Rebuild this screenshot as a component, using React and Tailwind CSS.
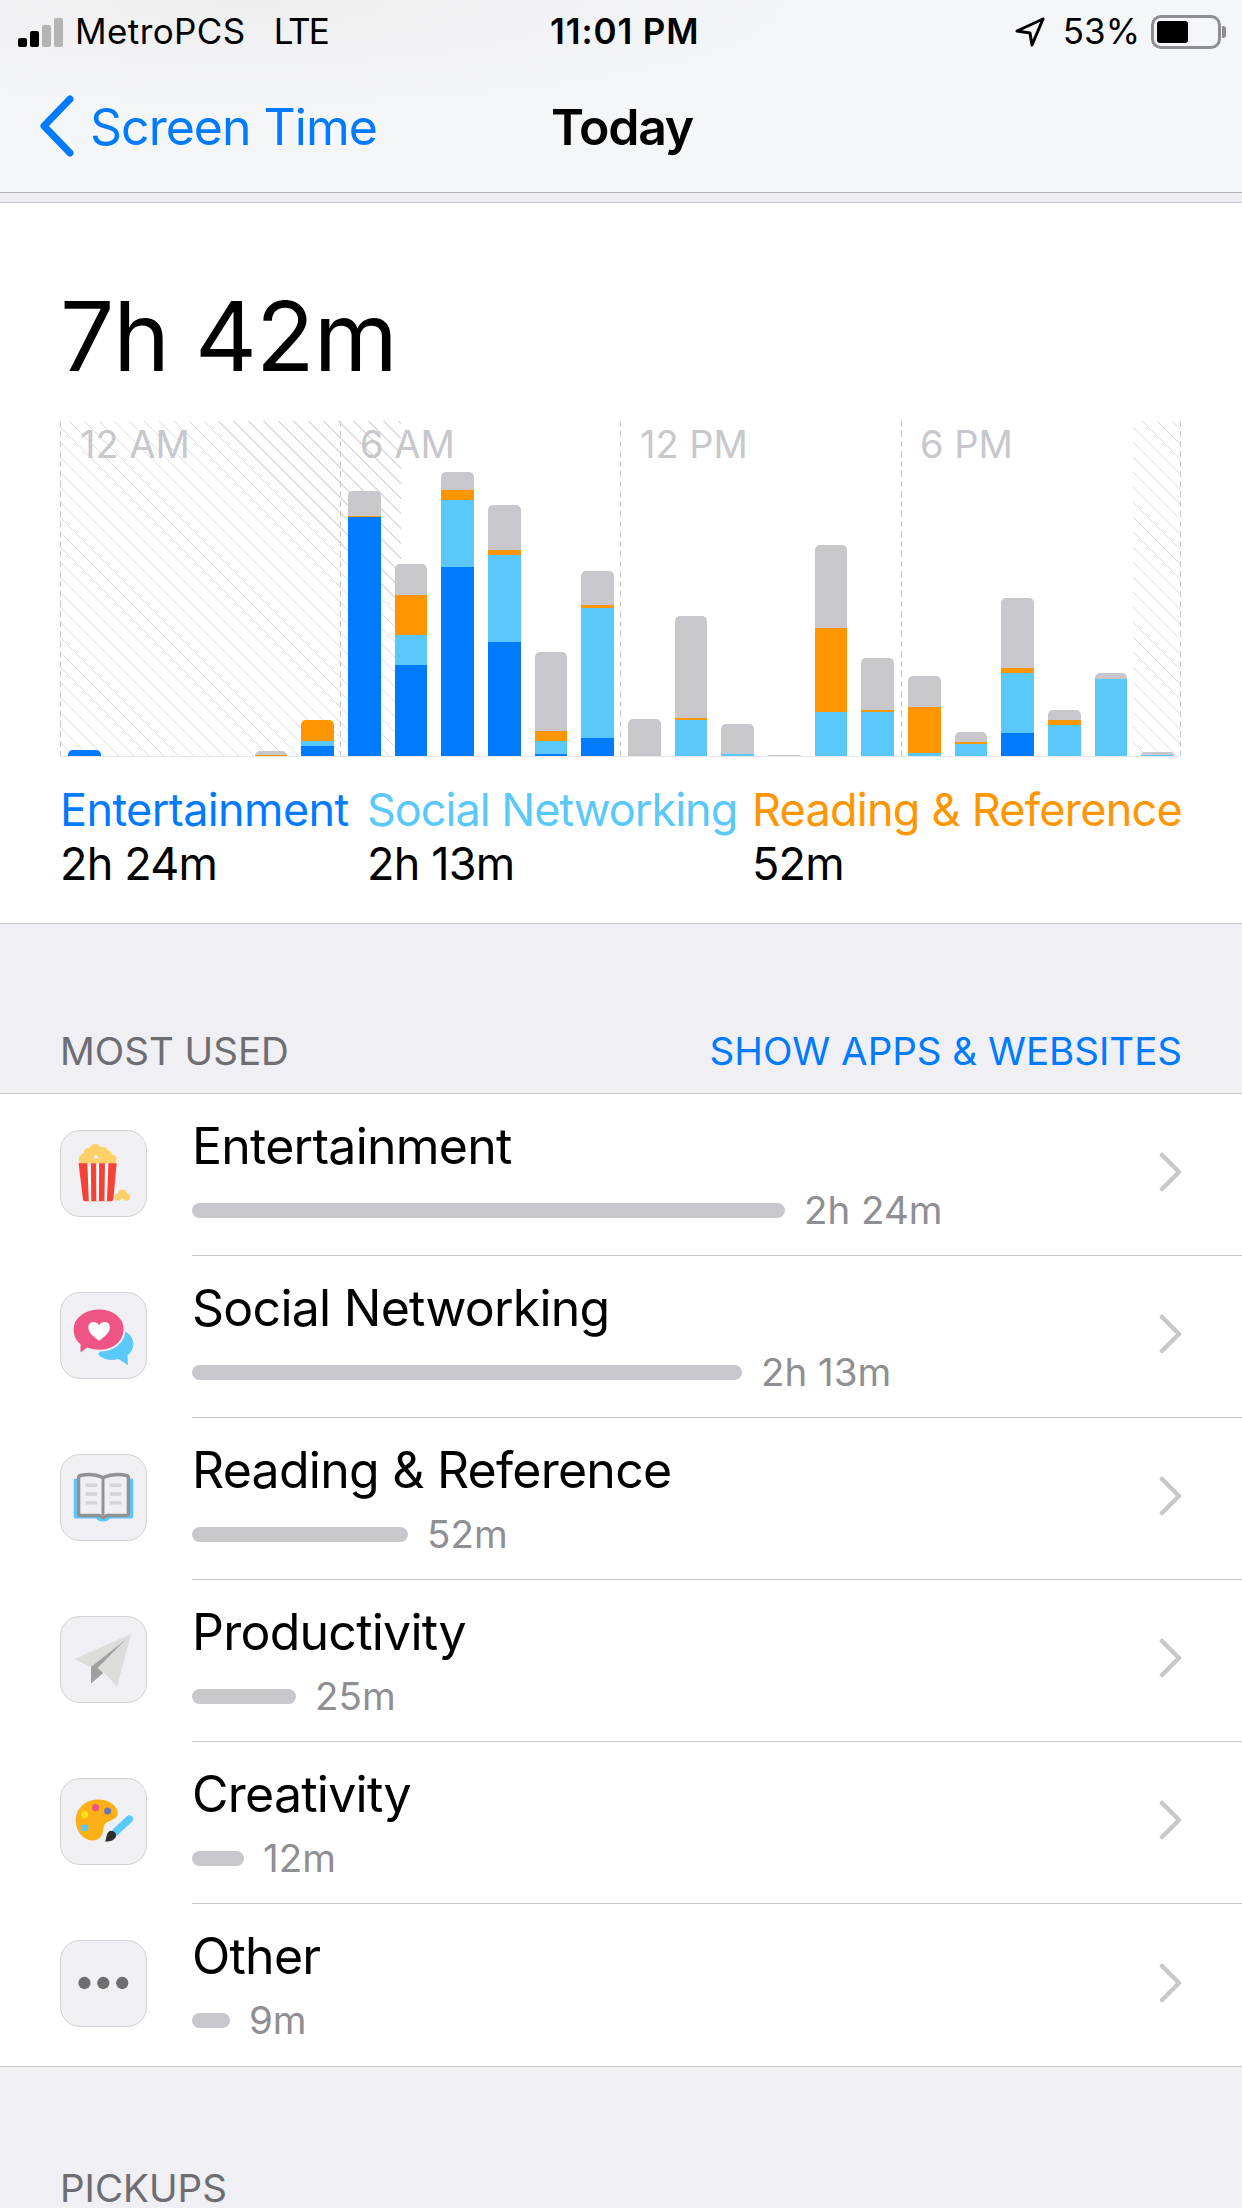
import React from 'react';

const font = { fontFamily: 'Inter, "Liberation Sans", sans-serif' };

// heights in px from the chart baseline: [blue, light blue, orange, gray]
const bars = [
  [6.3, 0, 0, 0], [0, 0, 0, 0], [0, 0, 0, 0], [0, 0, 0, 0],
  [0, 0, 0.7, 4], [9.7, 5, 21.7, 0], [238.7, 0, 1.3, 24.7], [90.7, 30, 40, 31],
  [188.7, 67, 10, 18], [113.7, 87, 5, 45], [1.7, 13, 10, 79], [17.7, 130.7, 2.3, 34],
  [0, 0, 0, 36.7], [0, 35.7, 2, 102], [0, 1.7, 0, 30], [0, 0, 0, 0.7],
  [0, 44.3, 83.3, 83], [0, 43.7, 2, 52], [0, 2.7, 46, 31], [0, 12.3, 1.3, 10],
  [22.7, 60, 5, 70], [0, 30.7, 5, 10], [0, 76.7, 0, 6], [0, 1.5, 0, 2.5],
];

const barColors = ['bg-[#007aff]', 'bg-[#5ac8fa]', 'bg-[#ff9500]', 'bg-[#c7c7cc]'];

const PopcornIcon = () => (
  <svg viewBox="0 0 87 87" className="w-full h-full">
    <g fill="#fdd167">
      <circle cx="24" cy="29" r="6" />
      <circle cx="29" cy="23" r="6" />
      <circle cx="35" cy="19" r="6" />
      <circle cx="42" cy="22" r="6" />
      <circle cx="47" cy="25" r="5.5" />
      <circle cx="52" cy="29" r="5" />
      <path d="M18 33 L22 28 H53 L57 33 Z" />
    </g>
    <path d="M18 33 H57 L53.5 70 Q53 72 51 72 H25 Q23 72 22.5 70 Z" fill="#f44336" />
    <path d="M27 33 H30.5 L31 72 H28.5 Z M36 33 H39 L38.8 72 H36.2 Z M45 33 H48.5 L47 72 H44.5 Z" fill="#fff" />
    <g fill="#fdd167">
      <circle cx="58.5" cy="67.5" r="3.8" />
      <circle cx="63" cy="64.5" r="4.6" />
      <circle cx="67" cy="67.5" r="3.8" />
    </g>
  </svg>
);

const ChatIcon = () => (
  <svg viewBox="0 0 87 87" className="w-full h-full">
    <path d="M52 36 C65 36 74 43 74 52 C74 57 72 61 68 64 L68.5 74 L59 67.5 C50 70 43 68 38 63 Z" fill="#5ac8fa" />
    <path d="M39 16 C54 16 65 25 65 37 C65 50 54 59 39 59 C34 59 30 58 27 57 L19 63 L19 53 C14 49 12 43 12 37 C12 25 24 16 39 16 Z" fill="#ee5584" stroke="#efeff4" strokeWidth="2" />
    <path d="M39 49 C33 44 28 41 28 35 C28 29 36 28 39 33 C42 28 50 29 50 35 C50 41 45 44 39 49 Z" fill="#fff" />
  </svg>
);

const BookIcon = () => (
  <svg viewBox="0 0 87 87" className="w-full h-full">
    <path d="M15 24 H72 Q74 24 74 26 V63 Q74 65 72 65 H50 Q48 68 43 68 Q38 68 36 65 H15 Q13 65 13 63 V26 Q13 24 15 24 Z" fill="#5ac8fa" />
    <path d="M20 21 Q32 18 43 23 Q55 18 67 21 Q69 21 69 24 V60 Q69 62 67 62 H47 L43 64 L39 62 H20 Q18 62 18 60 V24 Q18 21 20 21 Z" fill="#efeff4" stroke="#929292" strokeWidth="3.5" />
    <path d="M43 23 V62" stroke="#929292" strokeWidth="3" />
    <path d="M25 31 H37 M25 40 H37 M25 49 H37 M50 31 H62 M50 40 H62 M50 49 H62" stroke="#d4d4d6" strokeWidth="3.5" />
  </svg>
);

const PlaneIcon = () => (
  <svg viewBox="0 0 87 87" className="w-full h-full">
    <path d="M13.3 43.3 L71.7 17.3 L57.3 71.3 L43.3 55.7 L30.7 68 V51.3 Z" fill="#dcdcdb" />
    <path d="M66 23.3 L30.7 51.3 V68 L43.3 57.3 L37.3 52.3 Z" fill="#a0a0a0" />
  </svg>
);

const PaletteIcon = () => (
  <svg viewBox="0 0 87 87" className="w-full h-full">
    <path d="M36 21 C48 20 58 27 58 35 C58 42 48 42 45 46 C42 50 45 58 37 62 C26 66 15 56 15 42 C15 31 24 22 36 21 Z" fill="#fbb116" />
    <circle cx="35.3" cy="29.3" r="3.6" fill="#ee5584" />
    <circle cx="47.7" cy="32.7" r="3.6" fill="#6b75b5" />
    <circle cx="24.3" cy="36.7" r="3.6" fill="#ffe01b" />
    <circle cx="24.3" cy="50" r="3.6" fill="#5ac8fa" />
    <path d="M70 41 L56 54" stroke="#5ac8fa" strokeWidth="7.5" strokeLinecap="round" />
    <path d="M51 53 C56 53 58 58 55 61 C52 64 49 64 45 64 C47 61 46 54 51 53 Z" fill="#2e2e2e" />
  </svg>
);

const DotsIcon = () => (
  <svg viewBox="0 0 87 87" className="w-full h-full">
    <circle cx="24" cy="43" r="6.3" fill="#6d6d72" />
    <circle cx="43.3" cy="43" r="6.3" fill="#6d6d72" />
    <circle cx="62.7" cy="43" r="6.3" fill="#6d6d72" />
  </svg>
);

const rows = [
  { name: 'Entertainment', time: '2h 24m', width: 593, Icon: PopcornIcon },
  { name: 'Social Networking', time: '2h 13m', width: 550, Icon: ChatIcon },
  { name: 'Reading & Reference', time: '52m', width: 216, Icon: BookIcon },
  { name: 'Productivity', time: '25m', width: 104, Icon: PlaneIcon },
  { name: 'Creativity', time: '12m', width: 52, Icon: PaletteIcon },
  { name: 'Other', time: '9m', width: 38, Icon: DotsIcon },
];

const legend = [
  { name: 'Entertainment', time: '2h 24m', color: 'text-[#007aff] tracking-[-0.6px]', width: 'w-[307px]' },
  { name: 'Social Networking', time: '2h 13m', color: 'text-[#5ac8fa] tracking-[-1px]', width: 'w-[385px]' },
  { name: 'Reading & Reference', time: '52m', color: 'text-[#ff9500] tracking-[-0.75px]', width: 'w-[430px]' },
];

function StatusBar() {
  return (
    <div className="h-[63px] pl-[18px] pr-[16px] flex items-center text-[35px] text-black relative">
      <div className="flex items-end gap-[3px] h-[29px] mt-[1px]">
        <div className="w-[9px] h-[9px] bg-black rounded-[2px]" />
        <div className="w-[9px] h-[16px] bg-black rounded-[2px]" />
        <div className="w-[9px] h-[22px] bg-[#b4b4b4] rounded-[2px]" />
        <div className="w-[9px] h-[29px] bg-[#b4b4b4] rounded-[2px]" />
      </div>
      <span className="ml-[12px] tracking-[0.4px]">MetroPCS</span>
      <span className="ml-[28px] tracking-[-2px]">LTE</span>
      <span className="absolute left-[550px] font-semibold tracking-[0.9px]">11:01 PM</span>
      <div className="ml-auto flex items-center">
        <svg viewBox="0 0 30 30" className="w-[30px] h-[30px] mr-[18px]">
          <path d="M28 2 L2 14 L15 16 L17 28 Z" fill="none" stroke="#000" strokeWidth="3" strokeLinejoin="round" />
        </svg>
        <span>53%</span>
        <div className="ml-[11px] w-[70px] h-[34px] border-[3px] border-[#8e8e93] rounded-[10px] p-[3px]">
          <div className="w-[31px] h-full bg-black rounded-[3px]" />
        </div>
        <div className="w-[4px] h-[12px] bg-[#8e8e93] rounded-r-[3px] ml-[1px]" />
      </div>
    </div>
  );
}

function NavBar() {
  return (
    <div className="h-[129px] pl-[39px] flex items-center relative">
      <svg viewBox="0 0 36 62" className="w-[36px] h-[62px] -mt-[4px]">
        <path d="M31 4 L5 31 L31 58" fill="none" stroke="#007aff" strokeWidth="7" strokeLinecap="round" strokeLinejoin="round" />
      </svg>
      <span className="ml-[15px] text-[50px] text-[#007aff] tracking-[-1px]">Screen Time</span>
      <span className="absolute left-[551px] text-[50px] font-semibold text-black tracking-[-1.2px]">Today</span>
    </div>
  );
}

function Chart() {
  const hatch = 'h-full bg-[repeating-linear-gradient(45deg,transparent_0,transparent_9.4px,#dcdce0_9.4px,#dcdce0_10.6px)]';
  const dash = 'absolute top-0 bottom-0 w-[1px] bg-[repeating-linear-gradient(180deg,#c7c7cc_0,#c7c7cc_6px,transparent_6px,transparent_10px)]';
  return (
    <div className="relative h-[336px] w-[1120px] border-b border-[#e5e5ea]">
      {/* night-time hatching */}
      <div className="absolute inset-0 flex justify-between">
        <div className={`w-[341px] ${hatch}`} />
        <div className={`w-[47px] ${hatch}`} />
      </div>
      {['left-0', 'left-[280px]', 'left-[560px]', 'left-[841px]', 'left-[1120px]'].map((pos) => (
        <div key={pos} className={`${dash} ${pos}`} />
      ))}
      <div className="absolute inset-0 grid grid-cols-4 text-[38px] leading-[44px] text-[#c7c7cc] pt-[1px]">
        {['12 AM', '6 AM', '12 PM', '6 PM'].map((t) => (
          <span key={t} className="pl-[20px]">{t}</span>
        ))}
      </div>
      <div className="absolute inset-0 grid grid-cols-[repeat(24,1fr)] items-end">
        {bars.map((bar, i) => {
          const total = bar[0] + bar[1] + bar[2] + bar[3];
          return (
            <div key={i} className="pl-[8px] pr-[6px] flex">
              <div className="w-full flex flex-col-reverse rounded-t-[5px] overflow-hidden" style={{ height: total }}>
                {bar.map((h, j) => (
                  <div key={j} className={barColors[j]} style={{ height: h }} />
                ))}
              </div>
            </div>
          );
        })}
      </div>
    </div>
  );
}

function Row({ row, last }) {
  const { name, time, width, Icon } = row;
  return (
    <div className="flex h-[162px] pl-[60px]">
      <div className="w-[87px] h-[87px] mt-[36px] rounded-[20px] border border-[#d1d1d6] bg-[#efeff4] shrink-0 overflow-hidden">
        <Icon />
      </div>
      <div className={`ml-[45px] flex-1 flex pr-[60px] ${last ? '' : 'border-b border-[#c8c7cc]'}`}>
        <div className="flex-1">
          <div className="text-[50px] leading-[60px] mt-[22px] text-black tracking-[-0.75px]">{name}</div>
          <div className="flex items-center mt-[11px]">
            <div className="h-[15px] rounded-full bg-[#c7c7cc]" style={{ width }} />
            <span className="ml-[19px] text-[38.5px] leading-[46px] text-[#8e8e93]">{time}</span>
          </div>
        </div>
        <svg viewBox="0 0 23 40" className="w-[23px] h-[40px] self-center mb-[5px]">
          <path d="M3 3 L20 20 L3 37" fill="none" stroke="#c7c7cc" strokeWidth="4.5" strokeLinecap="round" strokeLinejoin="round" />
        </svg>
      </div>
    </div>
  );
}

export default function App() {
  return (
    <div className="h-[2208px] overflow-hidden bg-[#efeff4]" style={font}>
      {/* top bar */}
      <div className="h-[193px] border-b border-[#b2b2b2] bg-[radial-gradient(ellipse_at_20%_0%,#eeeeef_0%,#f5f6f8_45%)]">
        <StatusBar />
        <NavBar />
      </div>
      <div className="h-[10px] border-b border-[#c8c7cc]" />

      {/* daily total and chart */}
      <div className="bg-white h-[721px] border-b border-[#c8c7cc] px-[60px]">
        <div className="text-[96px] leading-[116px] pt-[75px] text-black h-[218px] tracking-[-1px]">7h 42m</div>
        <Chart />
        <div className="flex mt-[26px]">
          {legend.map((item) => (
            <div key={item.name} className={`${item.width} shrink-0 whitespace-nowrap`}>
              <div className={`text-[45px] leading-[54px] ${item.color}`}>{item.name}</div>
              <div className="text-[45px] leading-[54px] text-black tracking-[-0.8px]">{item.time}</div>
            </div>
          ))}
        </div>
      </div>

      {/* most used */}
      <div className="h-[169px] flex items-end justify-between px-[60px] pb-[19px] text-[38.5px] leading-[46px]">
        <span className="text-[#6d6d72]">MOST USED</span>
        <span className="text-[#007aff]">SHOW APPS &amp; WEBSITES</span>
      </div>
      <div className="bg-white border-y border-[#c8c7cc]">
        {rows.map((row, i) => (
          <Row key={row.name} row={row} last={i === rows.length - 1} />
        ))}
      </div>

      <div className="px-[60px] pt-[102px] text-[38.5px] leading-[38px] text-[#6d6d72]">PICKUPS</div>
    </div>
  );
}
